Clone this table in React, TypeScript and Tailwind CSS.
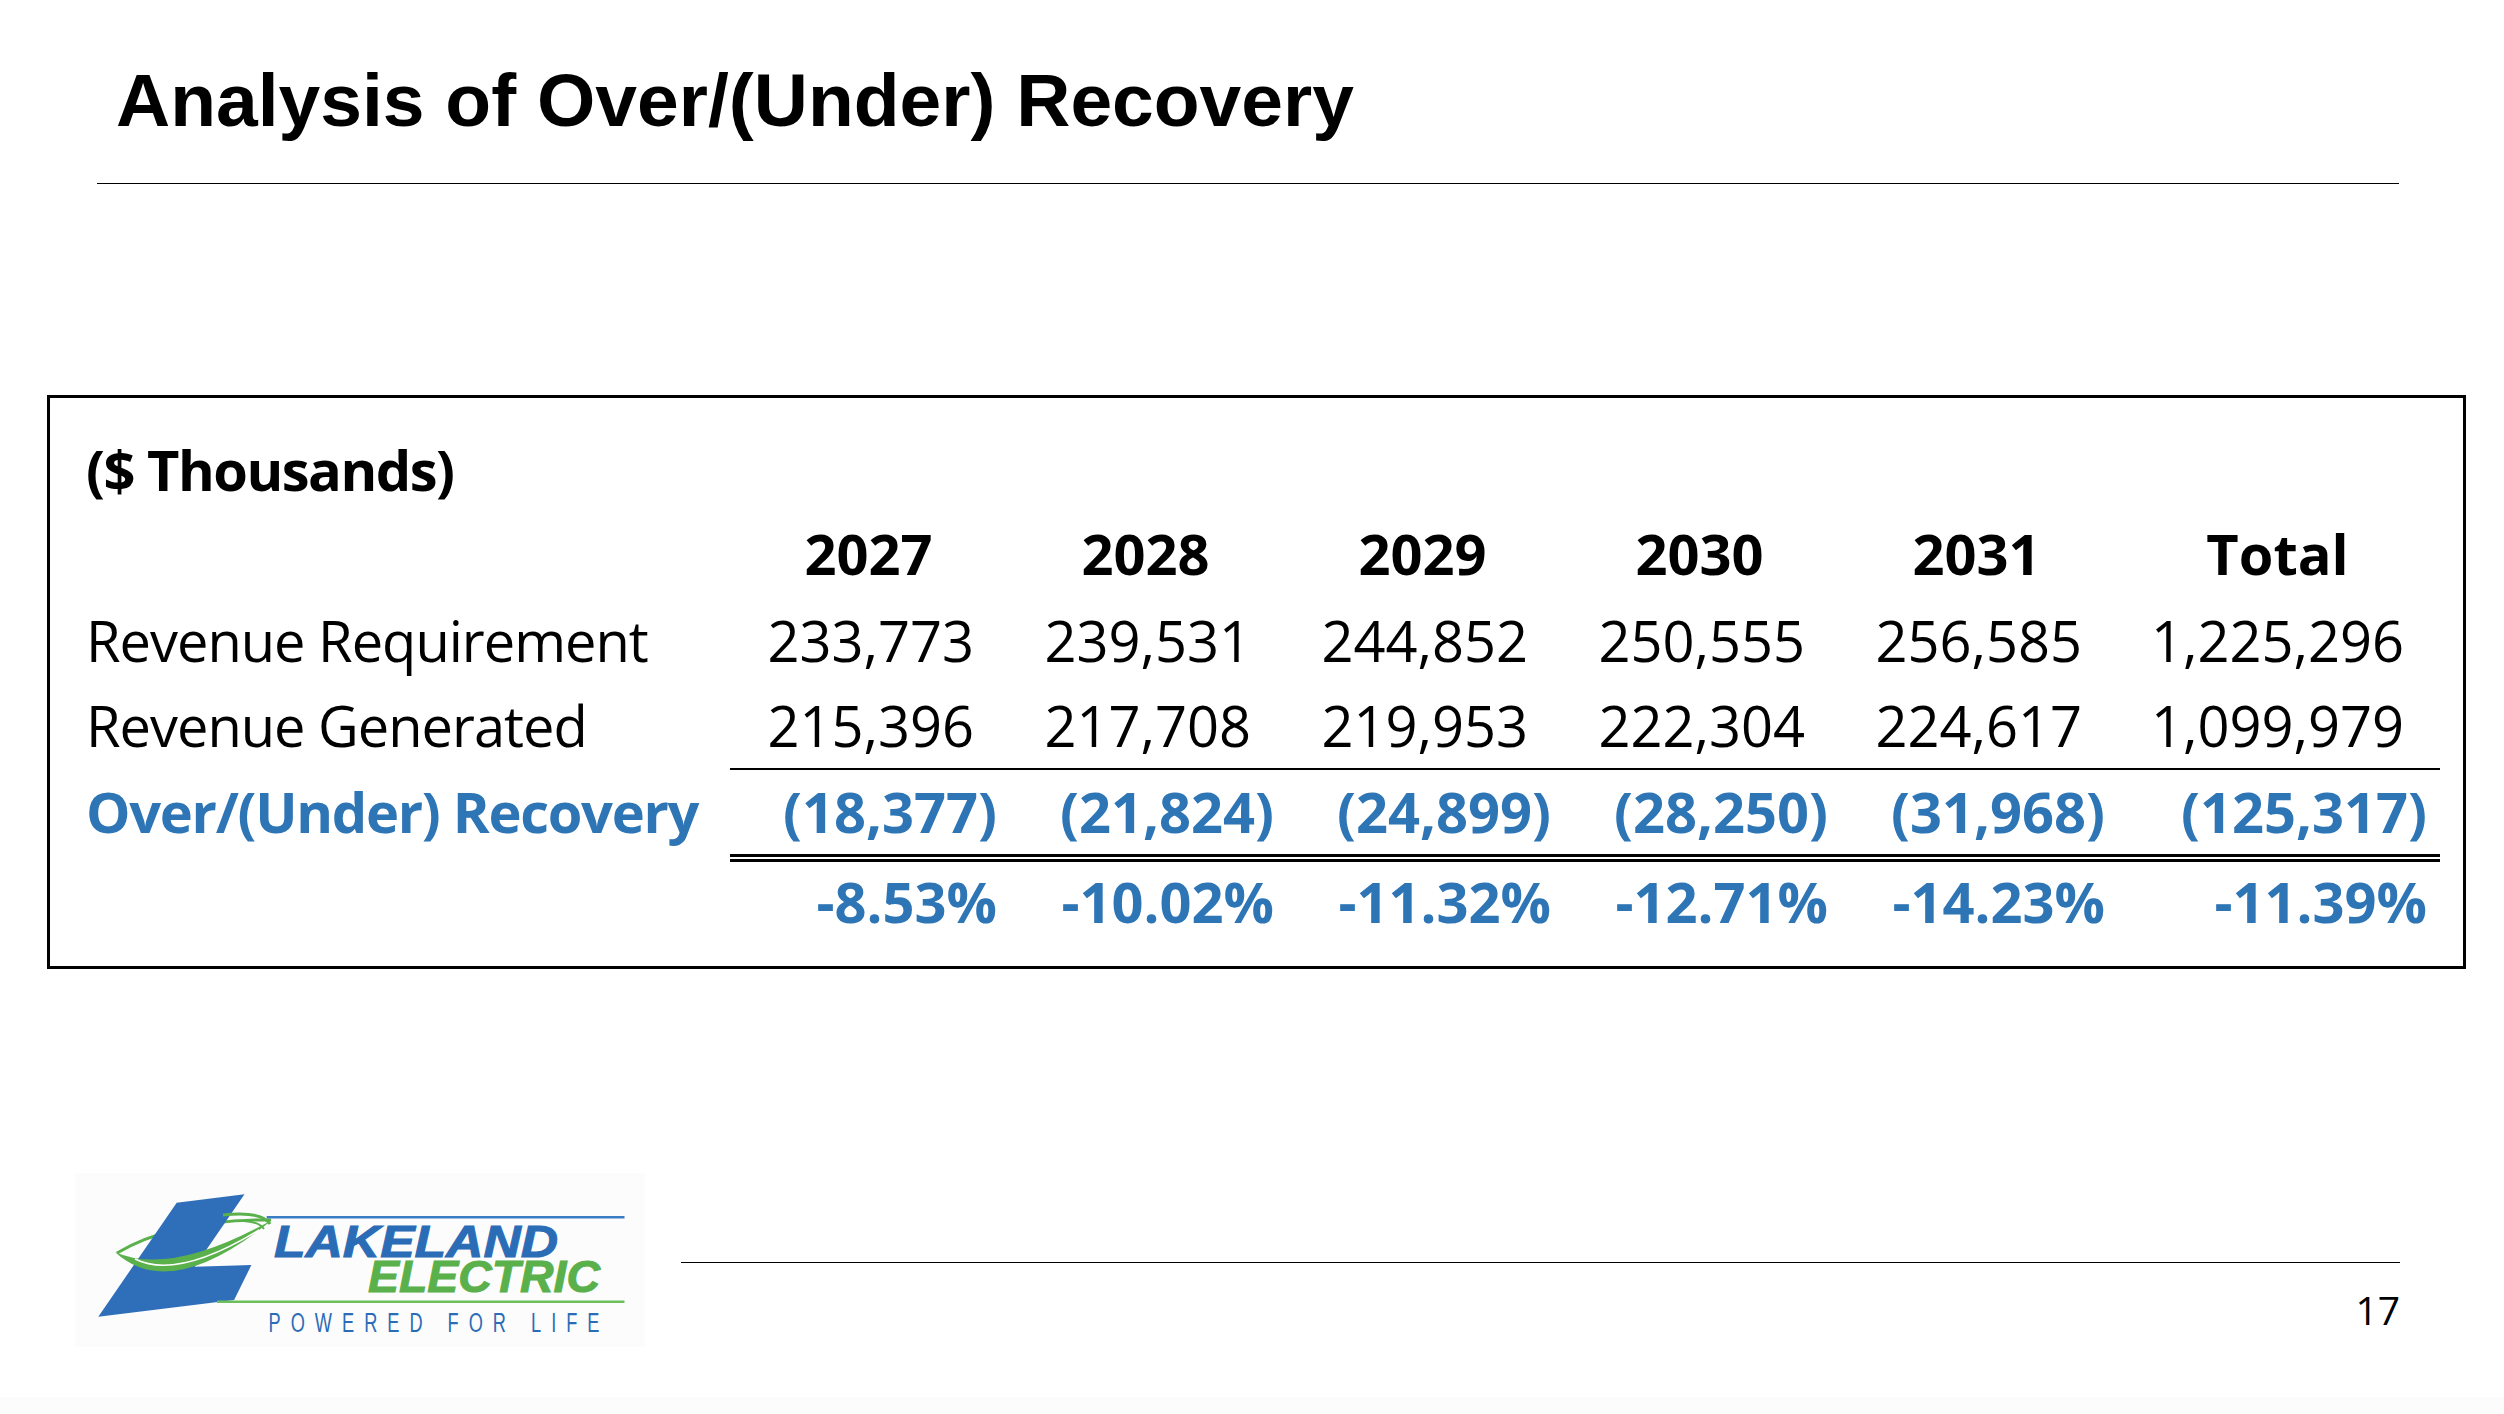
const years = ["2027", "2028", "2029", "2030", "2031", "Total"];

const rows = [
  { label: "Revenue Requirement", values: ["233,773", "239,531", "244,852", "250,555", "256,585", "1,225,296"] },
  { label: "Revenue Generated", values: ["215,396", "217,708", "219,953", "222,304", "224,617", "1,099,979"] },
];

const recovery = ["(18,377)", "(21,824)", "(24,899)", "(28,250)", "(31,968)", "(125,317)"];
const percents = ["-8.53%", "-10.02%", "-11.32%", "-12.71%", "-14.23%", "-11.39%"];

const grid = "grid grid-cols-[644px_repeat(5,277px)_325px]";

function Logo() {
  return (
    <svg width="570" height="174" viewBox="0 0 570 174" className="ml-[75px] shrink-0">
      <rect width="570" height="174" fill="#fcfcfc" />
      {/* back half of the ring */}
      <path d="M42 80 Q100 46 196 47" fill="none" stroke="#5ab04b" strokeWidth="3" />
      {/* the L */}
      <polygon
        points="101.7,29.7 169.5,21.3 119.7,93.7 176.4,92 159.1,127 23.3,143.7"
        fill="#2f6fba"
      />
      {/* front half of the ring */}
      <path d="M40 79 Q95 130 197 47 Q95 104 40 79 Z" fill="#5ab04b" />
      <path d="M60 86 Q102 107 184 57" fill="none" stroke="#ffffff" strokeWidth="1.5" />
      <path d="M148 42 Q187 38 195 51" fill="none" stroke="#5ab04b" strokeWidth="3" />
      <path d="M154 48 Q182 46 189 56" fill="none" stroke="#5ab04b" strokeWidth="2" />
      <line x1="191.7" y1="44.3" x2="549.5" y2="44.3" stroke="#3b7dc4" strokeWidth="2.5" />
      <line x1="142" y1="128.7" x2="549.5" y2="128.7" stroke="#6cbf5c" strokeWidth="2.5" />
      <text
        x="199"
        y="83.7"
        fontFamily="Liberation Sans, Arial, sans-serif"
        fontWeight="700"
        fontStyle="italic"
        fontSize="44"
        fill="#2b6cb6"
        stroke="#2b6cb6"
        strokeWidth="1"
        textLength="284"
        lengthAdjust="spacingAndGlyphs"
      >
        LAKELAND
      </text>
      <text
        x="293"
        y="118.7"
        fontFamily="Liberation Sans, Arial, sans-serif"
        fontWeight="700"
        fontStyle="italic"
        fontSize="44"
        fill="#5ab04b"
        stroke="#5ab04b"
        strokeWidth="1"
        textLength="232"
        lengthAdjust="spacingAndGlyphs"
      >
        ELECTRIC
      </text>
      <text
        transform="translate(193.6 158.7) scale(0.65 1)"
        x="0"
        y="0"
        fontFamily="Liberation Sans, Arial, sans-serif"
        fontSize="28"
        fill="#2b6cb6"
        textLength="509"
        lengthAdjust="spacing"
      >
        POWERED FOR LIFE
      </text>
    </svg>
  );
}

export default function App() {
  return (
    <div className="w-[2504px] h-[1414px] bg-white flex flex-col overflow-hidden text-black">
      <h1 className="mt-[63px] ml-[116px] text-[75px] leading-[75px] font-bold font-['Liberation_Sans',Arial,sans-serif]">
        Analysis of Over/(Under) Recovery
      </h1>
      <div className="mt-[45px] ml-[97px] w-[2302px] h-px bg-black" />

      {/* table box */}
      <div className="mt-[211px] ml-[47px] w-[2419px] border-[3px] border-black pt-[28px] pb-[22px] pl-[36px] pr-[23px] font-['Open_Sans',sans-serif] text-[56px] leading-[86px]">
        <div className="h-[84px] font-bold tracking-[-1.5px]">($ Thousands)</div>

        <div className={`${grid} h-[87px] font-bold`}>
          <div />
          {years.map((y) => (
            <div key={y} className="text-center">
              {y}
            </div>
          ))}
        </div>

        {rows.map((r, ri) => (
          <div key={r.label} className={`${grid} ${ri === 0 ? "h-[85px]" : "h-[86px]"}`}>
            <div className="tracking-[-1px] whitespace-nowrap">{r.label}</div>
            {r.values.map((v, i) => (
              <div
                key={i}
                className={`text-right ${i === 5 ? "pr-[36px]" : "pr-[33px]"} ${ri === 1 ? "border-b-2 border-black" : ""}`}
              >
                {v}
              </div>
            ))}
          </div>
        ))}

        <div className={`${grid} h-[90px] font-bold text-[#2e75b6]`}>
          <div className="tracking-[-1.3px] whitespace-nowrap">Over/(Under) Recovery</div>
          {recovery.map((v, i) => (
            <div
              key={i}
              className={`text-right border-b-[8px] border-double border-black ${i === 5 ? "pr-[13px]" : "pr-[10px]"}`}
            >
              {v}
            </div>
          ))}
        </div>

        <div className={`${grid} h-[86px] font-bold text-[#2e75b6]`}>
          <div />
          {percents.map((v, i) => (
            <div key={i} className={`text-right ${i === 5 ? "pr-[13px]" : "pr-[10px]"}`}>
              {v}
            </div>
          ))}
        </div>
      </div>

      {/* footer */}
      <div className="mt-[204px] flex">
        <Logo />
        <div className="ml-[36px] w-[1719px] flex flex-col">
          <div className="mt-[89px] h-px bg-black" />
          <div className="mt-[27px] self-end text-[39px] leading-[39px] font-['Open_Sans',sans-serif]">17</div>
        </div>
      </div>

      <div className="mt-auto h-[17px] bg-[#fcfcfc]" />
    </div>
  );
}
